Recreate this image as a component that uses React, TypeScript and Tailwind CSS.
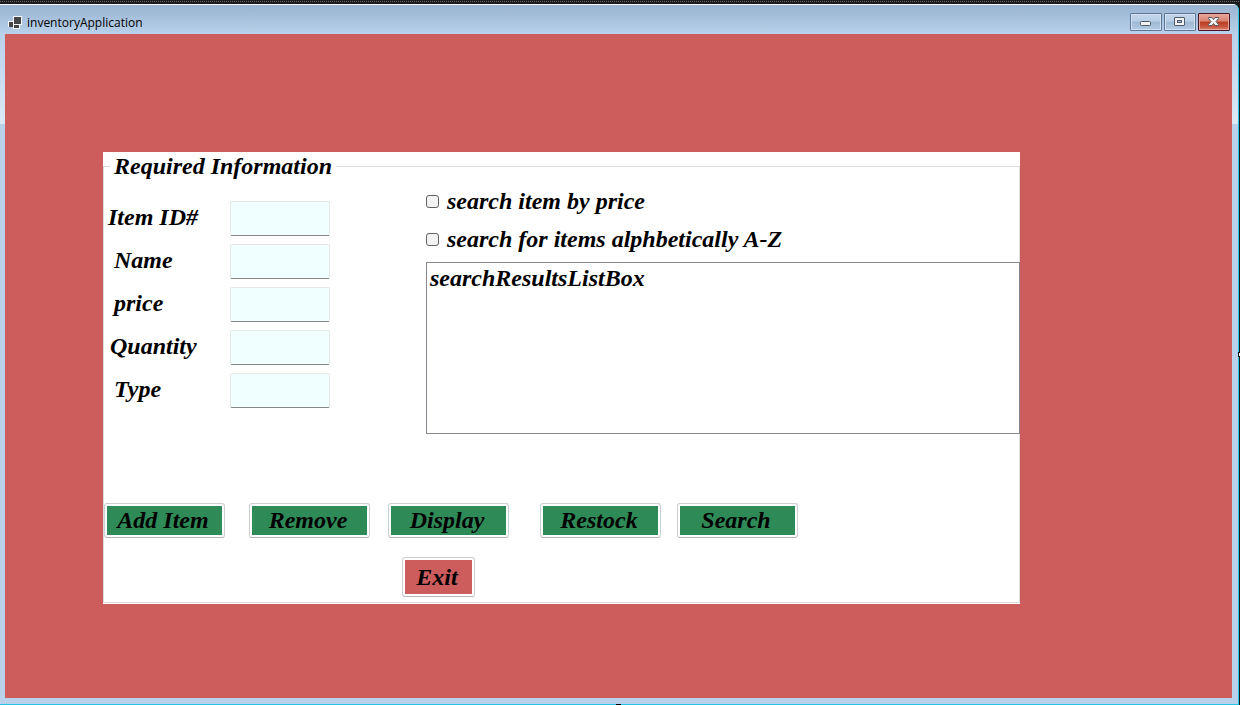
import React from "react";

const fields = [
  { id: "itemId", label: "Item ID#", indent: "pl-[5px]" },
  { id: "name", label: "Name", indent: "pl-[11px]" },
  { id: "price", label: "price", indent: "pl-[11px]" },
  { id: "quantity", label: "Quantity", indent: "pl-[7px]" },
  { id: "type", label: "Type", indent: "pl-[11px]" },
];

const actions = [
  { label: "Add Item", gap: "" },
  { label: "Remove", gap: "ml-6" },
  { label: "Display", gap: "ml-[18px]" },
  { label: "Restock", gap: "ml-[31px]" },
  { label: "Search", gap: "ml-4" },
];

function AppIcon() {
  return (
    <svg width="14" height="14" viewBox="0 0 14 14" shapeRendering="crispEdges" aria-hidden="true">
      <path d="M5 0h9v9h-2v4H5v-2H0V5h5z" fill="#f4f7fb" />
      <path d="M6 1h7v7H6z" fill="#454545" />
      <path d="M1 6h4v5H1z" fill="#454545" />
      <path d="M6 9h5v3H6z" fill="#454545" />
    </svg>
  );
}

function CaptionButton({ label, close, children }: { label: string; close?: boolean; children: React.ReactNode }) {
  const tone = close
    ? "border-[#4a1526] bg-[linear-gradient(#e8a79b_0%,#d9826f_45%,#b93a22_50%,#c9583f_80%,#d98a78_100%)] shadow-[inset_0_0_0_1px_#e8a79b]"
    : "border-[#5d7896] bg-[linear-gradient(#c3d6ea_0%,#b8cee6_45%,#9db8d3_50%,#b4cce5_100%)] shadow-[inset_0_0_0_1px_#d3e2f2]";
  return (
    <button type="button" aria-label={label} className={`flex h-[18px] w-8 items-center justify-center rounded-[1px] border ${tone}`}>
      {children}
    </button>
  );
}

function TitleBar() {
  return (
    <header className="flex h-[30px] items-start justify-between border-t border-white bg-[linear-gradient(#99b4d1,#b9d1ea)] pl-2 pr-2 pt-2">
      <div className="flex items-center gap-[5px] pt-0.5">
        <AppIcon />
        <h1 className="font-['Open_Sans','Noto_Sans',sans-serif] text-[12px] leading-4 text-black">inventoryApplication</h1>
      </div>
      <div className="flex gap-0.5">
        <CaptionButton label="Minimize">
          <svg width="14" height="12" viewBox="0 0 14 12" aria-hidden="true">
            <rect x="1.5" y="5.5" width="10" height="4" rx="1" fill="#f2f2f2" stroke="#4f5b6b" />
          </svg>
        </CaptionButton>
        <CaptionButton label="Maximize">
          <svg width="14" height="12" viewBox="0 0 14 12" aria-hidden="true">
            <rect x="1.5" y="1.5" width="10" height="8" rx="0.5" fill="#f2f2f2" stroke="#4f5b6b" />
            <rect x="4.5" y="4.5" width="4" height="2" fill="#a9c1dc" stroke="#4f5b6b" />
          </svg>
        </CaptionButton>
        <CaptionButton label="Close" close>
          <svg width="14" height="12" viewBox="0 0 14 12" aria-hidden="true">
            <path d="M1.5 1.5h3.5l1.5 2 1.5-2h3.5v1L9 5.5l2.5 3v1H8L6.5 7.5 5 9.5H1.5v-1L4 5.5 1.5 2.5z" fill="#f2f2f2" stroke="#555a6a" strokeLinejoin="round" />
          </svg>
        </CaptionButton>
      </div>
    </header>
  );
}

function FormButton({ label, className }: { label: string; className: string }) {
  return (
    <button
      type="button"
      className={`rounded-[3px] border border-[#cfcfcf] border-b-[#b4b4b4] bg-clip-content p-0.5 text-center font-bold italic ${className}`}
    >
      <span className="pr-[3px]">{label}</span>
    </button>
  );
}

export default function App() {
  return (
    <div className="relative flex min-h-screen flex-col bg-[#1b1a1c]">
      <div className="h-1 bg-[repeating-linear-gradient(90deg,#6b6b6b_0px,#6b6b6b_1px,transparent_1px,transparent_2px)] bg-[length:100%_1px] bg-[position:0_1px] bg-no-repeat" />
      <div className="mr-px flex flex-1 flex-col overflow-hidden rounded-tr-md border-b border-r border-[#27c3e3] bg-[#b9d1ea]">
        <TitleBar />
        <main className="flex flex-1 bg-[linear-gradient(#b9d1ea,#dce9f6)] bg-[length:100%_90px] bg-no-repeat pb-1.5 pl-[5px] pr-1.5">
          <div className="flex-1 bg-[#cd5c5c] pb-[94px] pl-[98px] pr-[212px] pt-[118px]">
            <form
              onSubmit={(event) => event.preventDefault()}
              className="bg-white pb-px font-['Liberation_Serif','Times_New_Roman',serif] text-[24px] font-bold italic leading-[29px] text-black"
            >
              <fieldset className="border border-[#dcdcdc]">
                <legend className="ml-1.5 px-1">Required Information</legend>

                <div className="flex gap-24 pt-1.5">
                  <div className="flex flex-col gap-2 pt-3.5">
                    {fields.map((field) => (
                      <div key={field.id} className="-ml-px flex items-center">
                        <div className={`w-[127px] pb-0.5 ${field.indent}`}>
                          <label htmlFor={field.id}>{field.label}</label>
                        </div>
                        <input
                          id={field.id}
                          type="text"
                          className="h-[35px] w-[100px] rounded-xs border border-[#e6e6e6] border-b-[#868686] bg-[#f0ffff] px-1 outline-none"
                        />
                      </div>
                    ))}
                  </div>

                  <div className="-mr-px flex min-w-0 flex-1 flex-col">
                    <div className="flex flex-col gap-[9px]">
                      <label className="flex items-center gap-2">
                        <input type="checkbox" className="size-[13px] appearance-none rounded-[3px] border border-[#626262] bg-[#f3f3f3] checked:bg-[#005fb8]" />
                        search item by price
                      </label>
                      <label className="flex items-center gap-2">
                        <input type="checkbox" className="size-[13px] appearance-none rounded-[3px] border border-[#626262] bg-[#f3f3f3] checked:bg-[#005fb8]" />
                        search for items alphbetically A-Z
                      </label>
                    </div>
                    <select
                      size={6}
                      aria-label="Search results"
                      className="mt-2 h-[172px] w-full appearance-none overflow-hidden border border-[#828790] bg-white px-[3px] py-0.5 outline-none"
                    >
                      <option className="p-0 font-bold">searchResultsListBox</option>
                    </select>
                  </div>
                </div>

                <div className="flex pt-[69px]">
                  {actions.map((action) => (
                    <FormButton key={action.label} label={action.label} className={`h-[35px] w-[121px] bg-[#2e8b57] ${action.gap}`} />
                  ))}
                </div>
                <div className="flex pb-[5px] pl-[298px] pt-[19px]">
                  <FormButton label="Exit" className="h-10 w-[73px] bg-[#cd5c5c]" />
                </div>
              </fieldset>
            </form>
          </div>
        </main>
      </div>
      <span className="absolute right-0 top-1/2 -mt-px h-[5px] w-0.5 border border-r-0 border-black bg-white" />
      <span className="absolute bottom-0 left-1/2 -ml-1 h-px w-[5px] bg-black" />
    </div>
  );
}
